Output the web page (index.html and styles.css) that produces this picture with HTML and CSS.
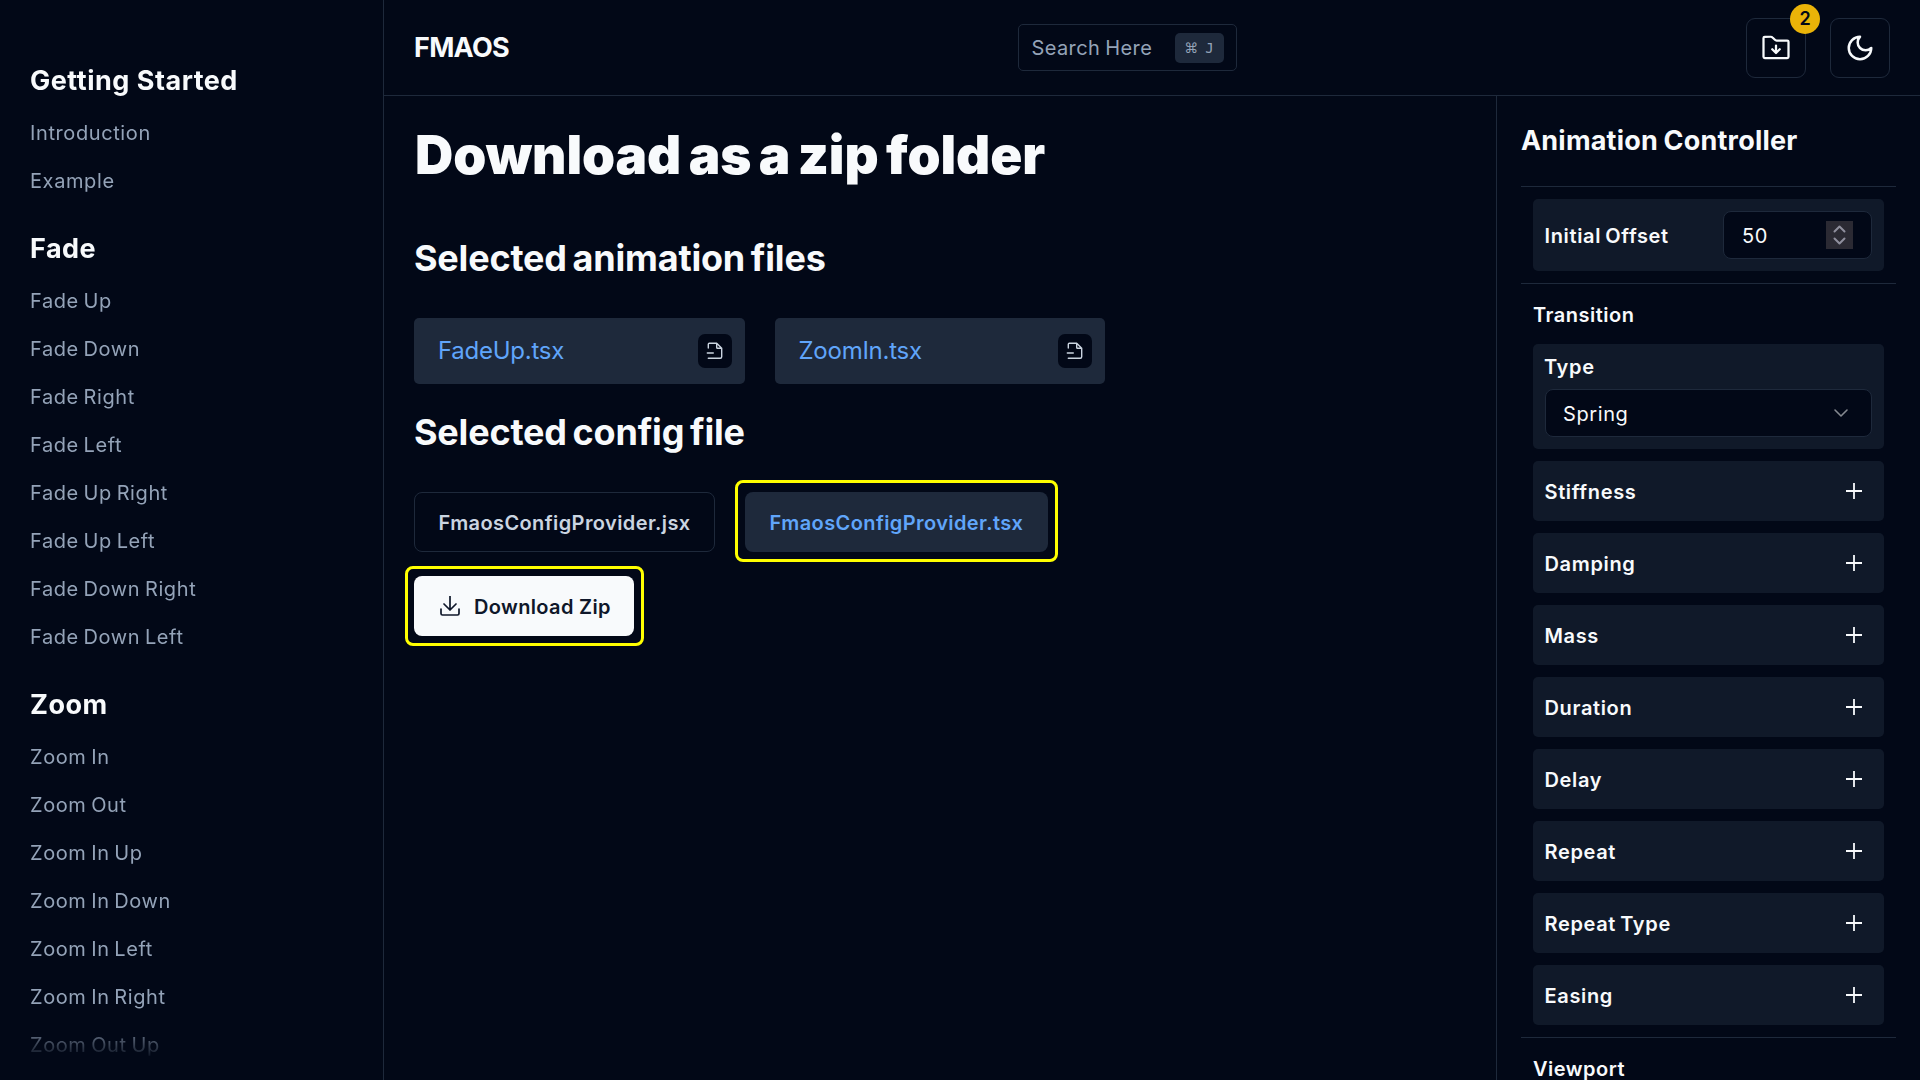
FILE: index.html
```html
<!DOCTYPE html>
<html lang="en">
<head>
<meta charset="utf-8">
<title>FMAOS</title>
<link rel="stylesheet" href="styles.css">
</head>
<body>
<svg class="sprite" aria-hidden="true">
  <symbol id="plus" viewBox="0 0 16 16"><path d="M8 0v16M0 8h16"/></symbol>
  <symbol id="file-remove" viewBox="0 0 20 20"><path d="M3.300 7V3.300a1 1 0 0 1 1-1h7.400l5 5v8.500a1.500 1.500 0 0 1-1.500 1.500H3.300M11.700 2.300v4.200a.8.8 0 0 0 .8.8h4.200M2.300 12h6"/></symbol>
</svg>
<div class="app">
  <aside class="sidebar">
    <nav class="nav">
      <section class="group">
        <h4>Getting Started</h4>
        <a>Introduction</a><a>Example</a>
      </section>
      <section class="group">
        <h4>Fade</h4>
        <a>Fade Up</a><a>Fade Down</a><a>Fade Right</a><a>Fade Left</a><a>Fade Up Right</a><a>Fade Up Left</a><a>Fade Down Right</a><a>Fade Down Left</a>
      </section>
      <section class="group">
        <h4>Zoom</h4>
        <a>Zoom In</a><a>Zoom Out</a><a>Zoom In Up</a><a>Zoom In Down</a><a>Zoom In Left</a><a>Zoom In Right</a><a>Zoom Out Up</a>
      </section>
    </nav>
  </aside>
  <div class="page">
    <header class="header">
      <div class="brand">FMAOS</div>
      <button class="search"><span>Search Here</span><kbd><span class="cmd">⌘</span><span>J</span></kbd></button>
      <div class="actions">
        <button class="icon-btn">
          <svg class="folder" viewBox="0 0 24 24"><path d="M21 20a1 1 0 0 0 1-1V7a1 1 0 0 0-1-1h-8.500a2 2 0 0 1-1.400-.6L9.200 3.600A2 2 0 0 0 7.800 3H3a1 1 0 0 0-1 1v15a1 1 0 0 0 1 1ZM12 10v6M15 13l-3 3-3-3"/></svg>
          <span class="badge">2</span>
        </button>
        <button class="icon-btn">
          <svg viewBox="0 0 24 24"><path d="M12 3a6 6 0 0 0 9 9 9 9 0 1 1-9-9Z"/></svg>
        </button>
      </div>
    </header>
    <div class="body">
      <main class="main">
        <h1>Download as a zip folder</h1>
        <h2>Selected animation files</h2>
        <div class="files">
          <div class="file"><span>FadeUp.tsx</span><button class="remove"><svg><use href="#file-remove"/></svg></button></div>
          <div class="file"><span>ZoomIn.tsx</span><button class="remove"><svg><use href="#file-remove"/></svg></button></div>
        </div>
        <h2 class="second">Selected config file</h2>
        <div class="configs">
          <button class="config jsx">FmaosConfigProvider.jsx</button>
          <button class="config tsx highlight">FmaosConfigProvider.tsx</button>
        </div>
        <button class="download highlight">
          <svg viewBox="0 0 20 20"><path d="M1 13v4.500A1.500 1.500 0 0 0 2.500 19h15a1.500 1.500 0 0 0 1.500-1.500V13M4 8l6 6 6-6M10 0v14"/></svg>
          <span>Download Zip</span>
        </button>
      </main>
      <aside class="controller">
        <h3>Animation Controller</h3>
        <div class="section offset">
          <div class="card initial">
            <span>Initial Offset</span>
            <div class="field number">
              <span>50</span>
              <svg class="spinner" viewBox="0 0 27 28"><path d="M8.500 10.500l5-5 5 5M8.500 17.500l5 5 5-5"/></svg>
            </div>
          </div>
        </div>
        <div class="section">
          <h5>Transition</h5>
          <div class="card type">
            <span class="label">Type</span>
            <div class="field select"><span>Spring</span><svg viewBox="0 0 14 8"><path d="M1 1l6 6 6-6"/></svg></div>
          </div>
          <div class="card row"><span>Stiffness</span><svg><use href="#plus"/></svg></div>
          <div class="card row"><span>Damping</span><svg><use href="#plus"/></svg></div>
          <div class="card row"><span>Mass</span><svg><use href="#plus"/></svg></div>
          <div class="card row"><span>Duration</span><svg><use href="#plus"/></svg></div>
          <div class="card row"><span>Delay</span><svg><use href="#plus"/></svg></div>
          <div class="card row"><span>Repeat</span><svg><use href="#plus"/></svg></div>
          <div class="card row"><span>Repeat Type</span><svg><use href="#plus"/></svg></div>
          <div class="card row"><span>Easing</span><svg><use href="#plus"/></svg></div>
        </div>
        <div class="section">
          <h5>Viewport</h5>
        </div>
      </aside>
    </div>
  </div>
</div>
</body>
</html>
```
FILE: styles.css
```css
:root {
  --bg: #020817;
  --border: #1e293b;
  --card: #101929;
  --text: #f8fafc;
  --muted: #94a3b8;
  --link: #60a5fa;
}
* { box-sizing: border-box; margin: 0; }
body {
  background: var(--bg);
  color: var(--text);
  font-family: Inter, "Noto Sans", sans-serif;
  font-size: 20px;
  overflow: hidden;
}
button { font: inherit; color: inherit; background: none; border: 0; padding: 0; }
svg { fill: none; stroke: currentColor; stroke-linecap: round; stroke-linejoin: round; flex: none; }
.sprite { display: none; }

.app { display: flex; height: 1080px; }

.sidebar {
  width: 384px;
  flex: none;
  padding: 61px 0 20px 30px;
  border-right: 1px solid var(--border);
}
.nav {
  display: flex;
  flex-direction: column;
  gap: 24px;
  height: 999px;
  overflow: hidden;
  -webkit-mask-image: linear-gradient(to top, transparent, #000 40px);
  mask-image: linear-gradient(to top, transparent, #000 40px);
}
.group { display: flex; flex-direction: column; flex: none; }
.group h4 { font-size: 27px; font-weight: 700; line-height: 40px; letter-spacing: .5px; margin-bottom: 8px; }
.group a { color: var(--muted); line-height: 48px; letter-spacing: .6px; word-spacing: -1.5px; }

.page { flex: 1; display: flex; flex-direction: column; min-width: 0; }
.header {
  height: 96px;
  flex: none;
  display: grid;
  grid-template-columns: 1fr 219px 1fr;
  align-items: center;
  padding: 0 30px;
  border-bottom: 1px solid var(--border);
}
.brand { font-size: 27px; font-weight: 700; letter-spacing: -.7px; }
.search {
  height: 47px;
  width: 219px;
  position: relative;
  left: -25px;
  display: flex;
  align-items: center;
  justify-content: space-between;
  padding: 0 12px 0 13px;
  border: 1px solid var(--border);
  border-radius: 5px;
  color: var(--muted);
  letter-spacing: .4px;
  word-spacing: -1px;
}
kbd {
  width: 49px;
  height: 30px;
  display: flex;
  align-items: center;
  justify-content: center;
  gap: 7px;
  border-radius: 5px;
  background: var(--border);
  font: 14px "DejaVu Sans Mono", monospace;
  letter-spacing: 0;
}
.cmd { font-family: "DejaVu Sans", sans-serif; }
.actions { display: flex; justify-content: flex-end; gap: 24px; }
.icon-btn {
  position: relative;
  width: 60px;
  height: 60px;
  display: grid;
  place-items: center;
  border: 1px solid var(--border);
  border-radius: 9px;
}
.icon-btn svg { width: 30px; height: 30px; stroke-width: 2; }
.icon-btn .folder { stroke-width: 1.8; }
.badge {
  position: absolute;
  top: -15px;
  right: -15px;
  width: 30px;
  height: 30px;
  border-radius: 50%;
  background: #eab308;
  color: #020817;
  font-size: 18px;
  font-weight: 600;
  line-height: 30px;
  text-align: center;
}

.body { flex: 1; display: flex; min-height: 0; }
.main { flex: 1; padding: 29px 30px 0; }
h1 { font-size: 53px; font-weight: 900; height: 60px; line-height: 60px; letter-spacing: -.1px; word-spacing: -3px; padding-left: 1px; }
h2 { font-size: 36px; font-weight: 700; line-height: 45px; letter-spacing: -.2px; word-spacing: -2.5px; margin: 51px 0 37px; }
h2.second { margin: 26px 0 37px; }
.files { display: flex; gap: 30px; }
.file {
  width: 330.5px;
  height: 66px;
  display: flex;
  align-items: center;
  justify-content: space-between;
  padding: 0 13px 0 24px;
  border-radius: 5px;
  background: var(--border);
  color: var(--link);
  font-size: 24px;
  letter-spacing: -.25px;
}
.file span { padding-bottom: 1px; }
.remove {
  width: 34px;
  height: 34px;
  margin-bottom: 1px;
  display: grid;
  place-items: center;
  border-radius: 7px;
  background: var(--bg);
  color: #cbd5e1;
}
.remove svg { width: 20px; height: 20px; stroke-width: 1.4; }
.configs { display: flex; gap: 30px; }
.config {
  height: 60px;
  padding-top: 2px;
  border-radius: 8px;
  font-weight: 600;
  letter-spacing: .4px;
}
.jsx { width: 301px; border: 1px solid var(--border); color: #cbd5e1; }
.tsx { width: 303px; background: var(--border); color: var(--link); }
.highlight { position: relative; }
.highlight::after {
  content: "";
  position: absolute;
  inset: -10px -10px -10px -9px;
  border: 3px solid #ff0;
  border-radius: 8px;
}
.tsx.highlight::after { inset: -12px -10px -10px; }
.download {
  width: 220px;
  height: 60px;
  margin-top: 24px;
  display: flex;
  align-items: center;
  gap: 14px;
  padding-left: 26px;
  border-radius: 8px;
  background: var(--text);
  color: #0f172a;
  font-weight: 600;
  letter-spacing: .35px;
}
.download span { padding-top: 2px; }
.download svg { width: 20px; height: 20px; stroke-width: 1.7; }

.controller {
  width: 424px;
  flex: none;
  padding: 0 24px;
  border-left: 1px solid var(--border);
  overflow: hidden;
}
h3 { font-size: 27px; font-weight: 700; line-height: 90px; letter-spacing: .2px; word-spacing: -1px; }
.section {
  display: flex;
  flex-direction: column;
  gap: 12px;
  padding: 0 12px 12px;
  border-top: 1px solid var(--border);
}
.offset { padding-top: 12px; }
h5 { font-size: 20px; font-weight: 600; height: 60px; line-height: 62px; letter-spacing: .5px; margin-bottom: -12px; }
.card {
  border-radius: 5px;
  background: var(--card);
  font-weight: 600;
  letter-spacing: .65px;
  word-spacing: -1.5px;
  padding: 0 12px 0 11.5px;
}
.initial, .row { display: flex; align-items: center; justify-content: space-between; }
.initial > span, .row > span, .field > span { padding-top: 2px; }
.initial { height: 72px; }
.row { height: 60px; padding-right: 22px; }
.row svg { width: 16px; height: 16px; stroke-width: 1.8; overflow: visible; stroke-linecap: butt; }
.type { height: 105px; padding-left: 12px; }
.label { display: block; height: 45px; line-height: 47px; margin-left: -1px; }
.field {
  height: 48px;
  display: flex;
  align-items: center;
  justify-content: space-between;
  border: 1px solid var(--border);
  border-radius: 8px;
  background: var(--bg);
  font-weight: 400;
}
.number { width: 149px; padding: 0 18px; }
.spinner { width: 27px; height: 28px; background: #2b2a33; color: #8f8f9d; stroke-width: 2; }
.select { padding: 0 23px 0 17px; letter-spacing: .6px; }
.select svg { width: 14px; height: 8px; color: #858990; stroke-width: 1.6; overflow: visible; }
```
